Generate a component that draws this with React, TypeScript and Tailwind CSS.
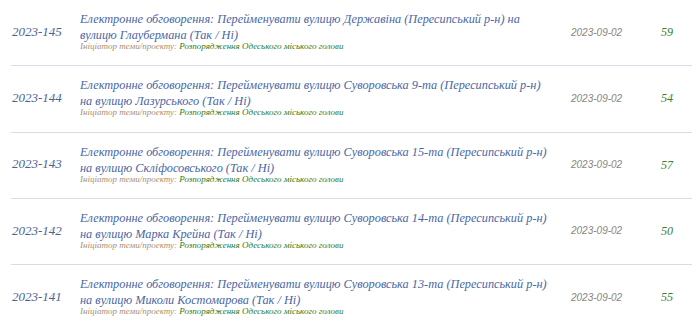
import React from "react";

const rows = [
  { id: "2023-145", title: "Електронне обговорення: Перейменувати вулицю Державіна (Пересипський р-н) на вулицю Глаубермана (Так / Ні)", votes: "59" },
  { id: "2023-144", title: "Електронне обговорення: Перейменувати вулицю Суворовська 9-та (Пересипський р-н) на вулицю Лазурського (Так / Ні)", votes: "54" },
  { id: "2023-143", title: "Електронне обговорення: Перейменувати вулицю Суворовська 15-та (Пересипський р-н) на вулицю Скліфосовського (Так / Ні)", votes: "57" },
  { id: "2023-142", title: "Електронне обговорення: Перейменувати вулицю Суворовська 14-та (Пересипський р-н) на вулицю Марка Крейна (Так / Ні)", votes: "50" },
  { id: "2023-141", title: "Електронне обговорення: Перейменувати вулицю Суворовська 13-та (Пересипський р-н) на вулицю Миколи Костомарова (Так / Ні)", votes: "55" },
];

export default function App() {
  return (
    <div className="w-[700px] h-[330px] bg-white overflow-hidden pl-[11px] pr-[8px] font-['Liberation_Serif',serif]">
      {rows.map((r) => (
        <div key={r.id} className="flex items-center h-[66.25px] border-b border-[#d9dce6] italic">
          <div className="w-[69px] shrink-0 pl-px pb-[2px] text-[13px] text-[#4d6291]">{r.id}</div>
          <div className="w-[491px] shrink-0 pb-[3px]">
            <div className="w-[470px] text-[12.3px] leading-[16px] text-[#4a67a3]">{r.title}</div>
            <div className="-mt-px text-[9px] leading-[9px]">
              <span className="text-[#a88f6e]">Ініціатор теми/проекту: </span>
              <span className="text-[#2f7a22]">Розпорядження Одеського міського голови</span>
            </div>
          </div>
          <div className="w-[90px] shrink-0 pb-px font-['Liberation_Sans',sans-serif] text-[10px] text-[#8a8580]">2023-09-02</div>
          <div className="pb-px text-[12px] text-[#3b7d2e]">{r.votes}</div>
        </div>
      ))}
    </div>
  );
}
